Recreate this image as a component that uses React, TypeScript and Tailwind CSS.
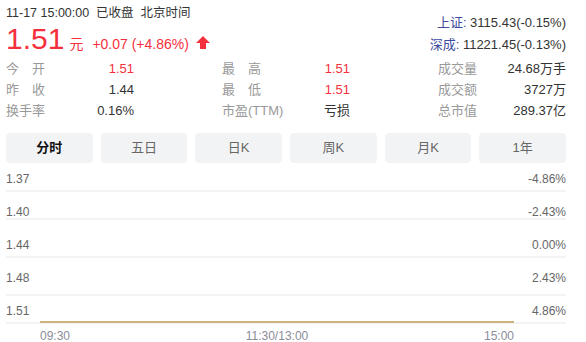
import React from "react";

const font = { fontFamily: '"Liberation Sans", "Noto Sans CJK SC", sans-serif' };

const stats = [
  [
    { label: "今开", value: "1.51", red: true },
    { label: "最高", value: "1.51", red: true },
    { label: "成交量", value: "24.68万手" },
  ],
  [
    { label: "昨收", value: "1.44" },
    { label: "最低", value: "1.51", red: true },
    { label: "成交额", value: "3727万" },
  ],
  [
    { label: "换手率", value: "0.16%" },
    { label: "市盈(TTM)", value: "亏损" },
    { label: "总市值", value: "289.37亿" },
  ],
];

const tabs = ["分时", "五日", "日K", "周K", "月K", "1年"];
const prices = ["1.37", "1.40", "1.44", "1.48", "1.51"];
const pcts = ["-4.86%", "-2.43%", "0.00%", "2.43%", "4.86%"];
const gridY = [28, 56, 94, 132, 160];

const Label: React.FC<{ text: string }> = ({ text }) => {
  // two-char labels are spread across the width of three chars
  if (text.length === 2) {
    return (
      <span className="flex w-[39px] justify-between text-[#999]">
        <span>{text[0]}</span>
        <span>{text[1]}</span>
      </span>
    );
  }
  return <span className="text-[#999]">{text}</span>;
};

const App: React.FC = () => {
  return (
    <div className="h-[342px] w-[586px] overflow-hidden bg-white pl-[6px] pr-[20px]" style={font}>
      <div className="flex justify-between">
        <div>
          <div className="mt-[4px] text-[12.5px] leading-[18px] text-[#333]">
            11-17 15:00:00&nbsp;&nbsp;已收盘&nbsp;&nbsp;北京时间
          </div>
          <div className="flex items-baseline text-[#f5303d]">
            <span className="text-[30px] leading-[34px]">1.51</span>
            <span className="ml-[5px] text-[14px]">元</span>
            <span className="ml-[9px] text-[14px]">+0.07 (+4.86%)</span>
            <svg className="ml-[7px]" width="14" height="13" viewBox="0 0 14 13">
              <polygon points="7,0 14,7 10,7 10,13 4,13 4,7 0,7" fill="#f5303d" />
            </svg>
          </div>
        </div>
        <div className="mt-[12px] flex flex-col items-end text-[13px] leading-[22px] text-[#333]">
          <div>
            <span className="text-[#3d4a9e]">上证:</span> 3115.43(-0.15%)
          </div>
          <div>
            <span className="text-[#3d4a9e]">深成:</span> 11221.45(-0.13%)
          </div>
        </div>
      </div>

      <div className="mt-[2px] flex flex-col text-[13px] leading-[21px]">
        {stats.map((row, i) => (
          <div key={i} className="flex justify-between">
            {row.map((s) => (
              <div key={s.label} className="flex w-[128px] justify-between">
                <Label text={s.label} />
                <span className={s.red ? "text-[#f5303d]" : "text-[#333]"}>{s.value}</span>
              </div>
            ))}
          </div>
        ))}
      </div>

      <div className="mt-[12px] grid grid-cols-6 gap-2">
        {tabs.map((t, i) => (
          <div
            key={t}
            className={`flex h-[30px] items-center justify-center rounded-[4px] bg-[#f2f3f5] text-[13px] ${
              i === 0 ? "font-bold text-[#111]" : "text-[#666]"
            }`}
          >
            {t}
          </div>
        ))}
      </div>

      <div className="relative h-[161px]">
        <svg className="absolute inset-0" width="560" height="161">
          {gridY.map((y) => (
            <rect key={y} x="0" y={y - 1} width="560" height="2" fill="#f3f3f5" />
          ))}
          <rect x="34" y="158" width="474" height="2" fill="#cfb27a" />
        </svg>
        <div className="relative flex justify-between text-[12px] leading-[33px] text-[#666]">
          <div className="flex flex-col">
            {prices.map((p) => (
              <span key={p}>{p}</span>
            ))}
          </div>
          <div className="flex flex-col items-end">
            {pcts.map((p) => (
              <span key={p}>{p}</span>
            ))}
          </div>
        </div>
      </div>

      <div className="mt-[5px] flex justify-between pl-[34px] pr-[52px] text-[12px] leading-[14px] text-[#8c8c99]">
        <span>09:30</span>
        <span>11:30/13:00</span>
        <span>15:00</span>
      </div>
    </div>
  );
};

export default App;
